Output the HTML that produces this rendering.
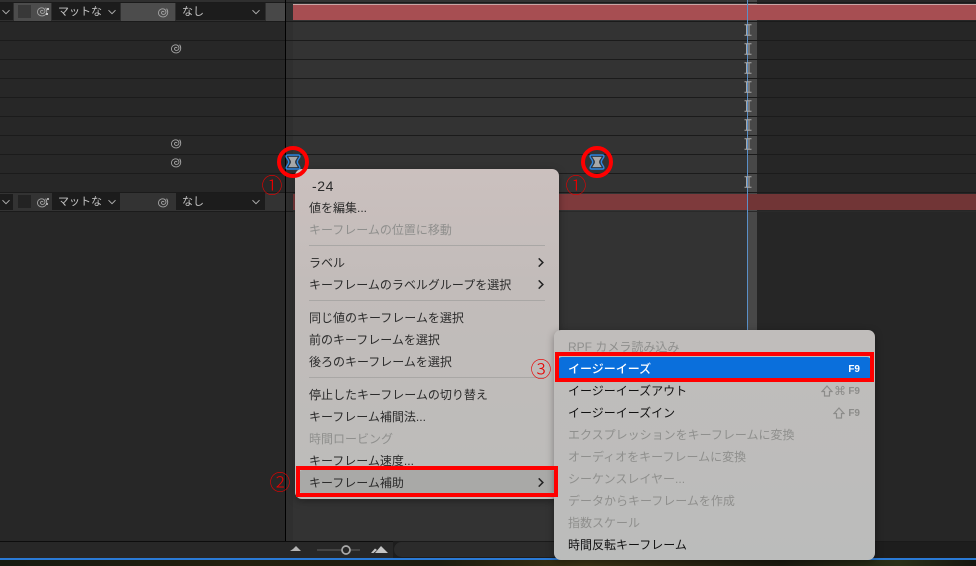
<!DOCTYPE html>
<html lang="ja"><head><meta charset="utf-8">
<style>
html,body{margin:0;padding:0;background:#262626}
#p{position:relative;width:976px;height:566px;overflow:hidden;background:#272727;font-family:"Liberation Sans","Noto Sans CJK JP",sans-serif}
#p div,#p svg{position:absolute}
.h{height:1px;left:0;width:976px;background:#1b1b1b}
.dd{background:#1c1c1c;color:#c4c4c4;font-size:11px;line-height:18px;height:17px;text-indent:6px}
.m{background:linear-gradient(#cbc0be 0,#c2bcba 35%,#bcbcba 100%);border-radius:7px;box-shadow:0 2px 8px rgba(0,0,0,.35)}
.t{font-size:12px;line-height:18px;height:18px;white-space:nowrap;color:#2b2b2b;margin-top:1px}
.g{color:#8f8f8d}
.b{color:#111}
.s{height:1px;background:#a9a7a5}
.r{box-sizing:border-box;border:4px solid #f00}
.n{color:#e80000;font-size:21px;line-height:24px;width:24px;height:24px;text-align:center;font-family:"Noto Sans CJK JP",sans-serif;font-weight:300}
.key{color:#8c8c8a;font-size:10px;font-weight:700;line-height:14px;height:14px;white-space:nowrap;text-align:right}
</style></head><body>
<div id="p">
<svg width="0" height="0" style="position:absolute">
<defs>
<symbol id="sp" viewBox="0 0 12 12"><path d="M7 6.200C6.900 5 4.800 5 4.500 6.600C4.300 8.200 6.400 9 7.900 8C9.500 6.900 9.300 4.200 7.300 3.200C4.900 2.100 1.700 3.700 1.500 6.600C1.300 9.400 3.900 11.200 6.600 10.900C8.900 10.600 10.500 8.900 10.700 6.800C10.800 5.400 10.500 3.900 9.600 2.700" fill="none" stroke="#a4a4a4" stroke-width=".9"/></symbol>
<symbol id="ib" viewBox="0 0 8 12"><path d="M.5 .7H7.500M.5 11.300H7.500M2.500 .7V11.300M5 .7V11.300" fill="none" stroke="#a9a9a9" stroke-width="1"/></symbol>
<symbol id="kf" viewBox="0 0 16 16"><path d="M2.500 1H13.500C15 1 15.300 2.500 14.500 3.500L12.800 6.200C12.200 7.300 12.200 8.700 12.800 9.800L14.500 12.500C15.300 13.500 15 15 13.500 15H2.500C1 15 .7 13.500 1.500 12.500L3.200 9.800C3.800 8.700 3.800 7.300 3.200 6.200L1.500 3.500C.7 2.500 1 1 2.500 1Z" fill="#2a3440" stroke="#2e86e0" stroke-width="1.400"/><path d="M3.300 2.900H12.700L10.300 6.800Q9.800 8 10.300 9.200L12.700 13.100H3.300L5.700 9.200Q6.200 8 5.700 6.800Z" fill="#a8a8a8"/></symbol>
<symbol id="ch" viewBox="0 0 10 6"><path d="M1.500 1.200L5 4.700L8.500 1.200" fill="none" stroke="#b0b0b0" stroke-width="1"/></symbol>
<symbol id="ar" viewBox="0 0 8 12"><path d="M1.500 1.500L6 6L1.500 10.500" fill="none" stroke="#222" stroke-width="1.700"/></symbol>
<symbol id="sh" viewBox="0 0 12 12"><path d="M6 1L11 6.500H8.500V11H3.500V6.500H1Z" fill="none" stroke="#8c8c8a" stroke-width="1.200"/></symbol>
</defs></svg>

<!-- timeline backgrounds -->
<div style="left:286px;top:0;width:7px;height:541px;background:#2f2f2f"></div>
<div style="left:293px;top:0;width:454px;height:541px;background:#333"></div>
<div style="left:748px;top:0;width:9px;height:541px;background:#484848"></div>
<div style="left:757px;top:0;width:219px;height:541px;background:#262626"></div>
<div style="left:0;top:0;width:286px;height:21px;background:#2f2f2f"></div>
<div style="left:0;top:192px;width:286px;height:19px;background:#333"></div>

<div class="h" style="top:2px"></div>
<div class="h" style="top:21px"></div><div class="h" style="top:40px"></div><div class="h" style="top:59px"></div><div class="h" style="top:78px"></div><div class="h" style="top:97px"></div><div class="h" style="top:116px"></div><div class="h" style="top:135px"></div><div class="h" style="top:154px"></div><div class="h" style="top:173px"></div><div class="h" style="top:192px"></div>
<div style="left:0;top:211px;width:293px;height:1px;background:#1b1b1b"></div>
<div style="left:293px;top:211px;width:683px;height:1px;background:#2a2a2a"></div>

<!-- bars -->
<div style="left:293px;top:4px;width:683px;height:16px;background:#a74e52;border-top:1px solid #c9a5a5;box-sizing:border-box"></div>
<div style="left:293px;top:194px;width:455px;height:16px;background:#7e3a3c"></div>
<div style="left:748px;top:194px;width:228px;height:16px;background:#713536"></div>

<!-- top row controls -->
<div style="left:14px;top:3px;width:37px;height:18px;background:#4c4c4c"></div>
<div style="left:18px;top:5px;width:13px;height:13px;background:#383838"></div>
<div style="left:121px;top:3px;width:54px;height:18px;background:#4c4c4c"></div>
<div style="left:266px;top:3px;width:20px;height:18px;background:#484848"></div>
<div style="left:0;top:3px;width:13px;height:17px;background:#1c1c1c"></div>
<svg style="left:1px;top:9px" width="10" height="6"><use href="#ch"/></svg>
<svg style="left:36px;top:5px" width="12" height="12"><use href="#sp"/></svg>
<div style="left:47px;top:8px;width:2px;height:2px;background:#ccc"></div><div style="left:46px;top:13px;width:2px;height:2px;background:#ccc"></div>
<div class="dd" style="left:52px;top:3px;width:68px">マットな</div>
<svg style="left:107px;top:9px" width="10" height="6"><use href="#ch"/></svg>
<svg style="left:157px;top:6px" width="12" height="12"><use href="#sp"/></svg>
<div class="dd" style="left:176px;top:3px;width:89px">なし</div>
<svg style="left:251px;top:9px" width="10" height="6"><use href="#ch"/></svg>

<!-- second row controls -->
<div style="left:0;top:194px;width:13px;height:16px;background:#1c1c1c"></div>
<svg style="left:1px;top:199px" width="10" height="6"><use href="#ch"/></svg>
<div style="left:18px;top:195px;width:13px;height:13px;background:#232323"></div>
<svg style="left:36px;top:196px" width="12" height="12"><use href="#sp"/></svg>
<div style="left:47px;top:198px;width:2px;height:2px;background:#aaa"></div><div style="left:46px;top:203px;width:2px;height:2px;background:#aaa"></div>
<div class="dd" style="left:52px;top:193px;width:68px">マットな</div>
<svg style="left:107px;top:199px" width="10" height="6"><use href="#ch"/></svg>
<svg style="left:157px;top:196px" width="12" height="12"><use href="#sp"/></svg>
<div class="dd" style="left:176px;top:193px;width:89px">なし</div>
<svg style="left:251px;top:199px" width="10" height="6"><use href="#ch"/></svg>

<!-- row spirals -->
<svg style="left:170px;top:42px" width="12" height="12"><use href="#sp"/></svg>
<svg style="left:170px;top:137px" width="12" height="12"><use href="#sp"/></svg>
<svg style="left:170px;top:156px" width="12" height="12"><use href="#sp"/></svg>

<!-- black divider + playhead -->
<div style="left:285px;top:0;width:1px;height:541px;background:#000"></div>
<div style="left:747px;top:0;width:1px;height:341px;background:#5a8fc8"></div>

<!-- I beams -->
<svg style="left:744px;top:24px" width="8" height="12"><use href="#ib"/></svg>
<svg style="left:744px;top:43px" width="8" height="12"><use href="#ib"/></svg>
<svg style="left:744px;top:62px" width="8" height="12"><use href="#ib"/></svg>
<svg style="left:744px;top:81px" width="8" height="12"><use href="#ib"/></svg>
<svg style="left:744px;top:100px" width="8" height="12"><use href="#ib"/></svg>
<svg style="left:744px;top:119px" width="8" height="12"><use href="#ib"/></svg>
<svg style="left:744px;top:138px" width="8" height="12"><use href="#ib"/></svg>
<svg style="left:744px;top:176px" width="8" height="12"><use href="#ib"/></svg>

<!-- keyframes -->
<svg style="left:285px;top:154px" width="16" height="16"><use href="#kf"/></svg>
<svg style="left:589px;top:154px" width="16" height="16"><use href="#kf"/></svg>

<!-- bottom bar -->
<div style="left:0;top:541px;width:393px;height:1px;background:#0d0d0d"></div>
<div style="left:393px;top:541px;width:583px;height:1px;background:#1a1a1a"></div>
<div style="left:0;top:542px;width:393px;height:16px;background:#272727"></div>
<div style="left:393px;top:542px;width:583px;height:16px;background:#1d1d1d"></div>
<div style="left:394px;top:542px;width:470px;height:15px;border-radius:8px;background:#2b2b2b"></div>
<div style="left:0;top:558px;width:976px;height:2px;background:#2a7ad6"></div>
<div style="left:0;top:560px;width:976px;height:6px;background:linear-gradient(90deg,#161a10,#23200f 25%,#1c1c10 45%,#3a3214 60%,#1c1a10 80%,#2a3018 92%,#151510)"></div>
<svg style="left:290px;top:545px" width="12" height="8"><path d="M0 6L3 4L6 1L9 4L11 6Z" fill="#b4b4b4"/></svg>
<div style="left:317px;top:549px;width:43px;height:2px;background:#444"></div>
<svg style="left:340px;top:544px" width="12" height="12"><circle cx="6" cy="6" r="4" fill="#272727" stroke="#aaa" stroke-width="1.700"/></svg>
<svg style="left:371px;top:545px" width="18" height="9"><path d="M0 8L4 3.500L6 5L2.500 8ZM4 8L10 1L17 8Z" fill="#c4c4c4"/></svg>

<!-- menu 1 -->
<div class="m" style="left:295px;top:169px;width:264px;height:330px"></div>
<div class="t" style="left:312px;top:176px;font-size:14px;letter-spacing:.6px">-24</div>
<div class="t" style="left:309px;top:198px">値を編集...</div>
<div class="t g" style="left:309px;top:220px">キーフレームの位置に移動</div>
<div class="s" style="left:309px;top:245px;width:236px"></div>
<div class="t" style="left:309px;top:253px">ラベル</div>
<svg style="left:537px;top:257px" width="8" height="11"><use href="#ar"/></svg>
<div class="t" style="left:309px;top:275px">キーフレームのラベルグループを選択</div>
<svg style="left:537px;top:279px" width="8" height="11"><use href="#ar"/></svg>
<div class="s" style="left:309px;top:300px;width:236px"></div>
<div class="t" style="left:309px;top:308px">同じ値のキーフレームを選択</div>
<div class="t" style="left:309px;top:330px">前のキーフレームを選択</div>
<div class="t" style="left:309px;top:352px">後ろのキーフレームを選択</div>
<div class="s" style="left:309px;top:377px;width:236px"></div>
<div class="t" style="left:309px;top:385px">停止したキーフレームの切り替え</div>
<div class="t" style="left:309px;top:407px">キーフレーム補間法...</div>
<div class="t g" style="left:309px;top:429px">時間ロービング</div>
<div class="t" style="left:309px;top:451px">キーフレーム速度...</div>
<div style="left:299px;top:470px;width:256px;height:23px;border-radius:4px;background:#a9a9a7"></div>
<div class="t" style="left:309px;top:473px">キーフレーム補助</div>
<svg style="left:537px;top:477px" width="8" height="11"><use href="#ar"/></svg>

<!-- menu 2 -->
<div class="m" style="left:554px;top:330px;width:321px;height:230px;background:linear-gradient(#c0bdbb,#bbbcbb)"></div>
<div class="t g" style="left:568px;top:337px">RPF カメラ読み込み</div>
<div style="left:558px;top:357px;width:313px;height:23px;border-radius:4px;background:#0a6fdc"></div>
<div class="t" style="left:568px;top:359px;color:#fff;font-weight:500">イージーイーズ</div>
<div class="key" style="left:820px;top:363px;width:40px;color:#fff">F9</div>
<div class="t b" style="left:568px;top:381px">イージーイーズアウト</div>
<svg style="left:821px;top:385px" width="12" height="12"><use href="#sh"/></svg>
<div class="key" style="left:833px;top:384px;width:13px;font-weight:400;font-size:12px;font-family:'DejaVu Sans',sans-serif">⌘</div>
<div class="key" style="left:820px;top:385px;width:40px">F9</div>
<div class="t b" style="left:568px;top:403px">イージーイーズイン</div>
<svg style="left:833px;top:407px" width="12" height="12"><use href="#sh"/></svg>
<div class="key" style="left:820px;top:407px;width:40px">F9</div>
<div class="t g" style="left:568px;top:425px">エクスプレッションをキーフレームに変換</div>
<div class="t g" style="left:568px;top:447px">オーディオをキーフレームに変換</div>
<div class="t g" style="left:568px;top:469px">シーケンスレイヤー...</div>
<div class="t g" style="left:568px;top:491px">データからキーフレームを作成</div>
<div class="t g" style="left:568px;top:513px">指数スケール</div>
<div class="t b" style="left:568px;top:535px">時間反転キーフレーム</div>

<!-- annotations -->
<svg style="left:275px;top:144px" width="36" height="36"><circle cx="18" cy="18" r="14" fill="none" stroke="#f00" stroke-width="4"/></svg>
<svg style="left:579px;top:144px" width="36" height="36"><circle cx="18" cy="18" r="14" fill="none" stroke="#f00" stroke-width="4"/></svg>
<div class="n" style="left:260px;top:173px">①</div>
<div class="n" style="left:564px;top:173px">①</div>
<div class="n" style="left:268px;top:470px">②</div>
<div class="n" style="left:529px;top:357px">③</div>
<div class="r" style="left:296px;top:466px;width:262px;height:31px"></div>
<div class="r" style="left:555px;top:352px;width:319px;height:30px"></div>
</div>
</body></html>
